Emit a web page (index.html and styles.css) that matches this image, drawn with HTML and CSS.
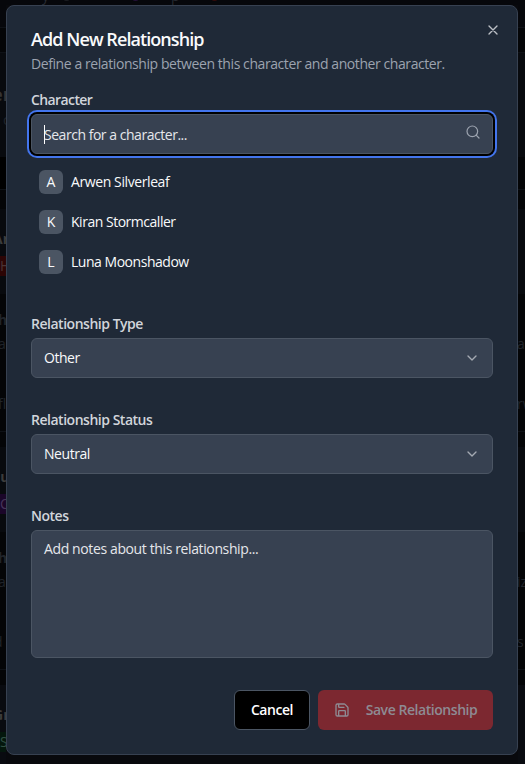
FILE: index.html
```html
<!DOCTYPE html>
<html lang="en">
<head>
<meta charset="utf-8">
<title>Add New Relationship</title>
<link rel="stylesheet" href="styles.css">
</head>
<body>
<div class="screen">
  <div class="strip" aria-hidden="true"><span class="frag-y">y</span><i class="dot gray"></i><i class="dot purple"></i><span class="frag-p">p</span><i class="dot red"></i></div>
  <div class="gutter left" aria-hidden="true">
    <div class="g h22"></div><div class="g line h25"></div>
    <div class="g panel line h105"><b class="er">er</b><span class="c">c</span></div>
    <div class="g black h32"></div>
    <div class="g line h20"></div>
    <div class="g panel h85"><b class="ar">Ar</b><span class="tag tag-red">H</span></div>
    <div class="g h137"><b class="th">h</b><span class="ta">a</span><span class="fl">fl</span></div>
    <div class="g line h16"></div>
    <div class="g panel h85"><b class="ar lu">lu</b><span class="tag tag-purple">C</span></div>
    <div class="g h137"><b class="th">h</b><span class="ta">a</span><span class="fl d">d</span></div>
    <div class="g line h16"></div>
    <div class="g panel rest"><b class="ar">Gr</b><span class="tag tag-green">S</span></div>
  </div>
  <main class="modal" role="dialog" aria-labelledby="title">
    <button class="close" aria-label="Close"><svg width="16" height="16" viewBox="0 0 24 24"><path d="M18 6 6 18M6 6l12 12"/></svg></button>
    <header>
      <h1 id="title"><span>Add New Relationship</span></h1>
      <p><span>Define a relationship between this character and another character.</span></p>
    </header>
    <section class="field character">
      <label class="short"><span>Character</span></label>
      <div class="control search"><i class="caret"></i><span class="placeholder">Search for a character...</span>
        <svg class="search-icon" width="16" height="16" viewBox="0 0 24 24"><circle cx="11" cy="11" r="8"/><path d="m21 21-4.3-4.3"/></svg>
      </div>
      <ul>
        <li><span class="avatar">A</span><span class="n1">Arwen Silverleaf</span></li>
        <li><span class="avatar">K</span><span class="n2">Kiran Stormcaller</span></li>
        <li><span class="avatar">L</span><span class="n3">Luna Moonshadow</span></li>
      </ul>
    </section>
    <section class="field">
      <label><span>Relationship Type</span></label>
      <div class="control"><span>Other</span><svg class="chevron" width="16" height="16" viewBox="0 0 24 24"><path d="m6 9 6 6 6-6"/></svg></div>
    </section>
    <section class="field">
      <label><span>Relationship Status</span></label>
      <div class="control"><span>Neutral</span><svg class="chevron" width="16" height="16" viewBox="0 0 24 24"><path d="m6 9 6 6 6-6"/></svg></div>
    </section>
    <section class="field notes">
      <label><span>Notes</span></label>
      <div class="control area"><span class="placeholder">Add notes about this relationship...</span></div>
    </section>
    <footer>
      <button class="btn cancel"><span>Cancel</span></button>
      <button class="btn save"><svg width="16" height="16" viewBox="0 0 24 24"><path d="M15.2 3a2 2 0 0 1 1.4.6l3.8 3.8a2 2 0 0 1 .6 1.4V19a2 2 0 0 1-2 2H5a2 2 0 0 1-2-2V5a2 2 0 0 1 2-2zM17 21v-7a1 1 0 0 0-1-1H8a1 1 0 0 0-1 1v7M7 3v4a1 1 0 0 0 1 1h7"/></svg><span>Save Relationship</span></button>
    </footer>
  </main>
  <div class="gutter right" aria-hidden="true">
    <div class="g h22"></div><div class="g line h25"></div>
    <div class="g panel line h105"></div>
    <div class="g h32"></div>
    <div class="g line h20"></div>
    <div class="g panel h85"></div>
    <div class="g h137"><span class="r1">an</span><span class="r2">rw</span></div>
    <div class="g line h16"></div>
    <div class="g panel h85"></div>
    <div class="g h137"><span class="r1">iz</span><span class="r2">s</span></div>
    <div class="g line h16"></div>
    <div class="g panel rest"></div>
  </div>
</div>
</body>
</html>
```
FILE: styles.css
```css
* { box-sizing: border-box; }
body { margin: 0; background: #040608; font: 14px/20px "Open Sans", "Noto Sans", sans-serif; color: #f9fafb; }
svg { fill: none; stroke: currentColor; stroke-width: 2; stroke-linecap: round; stroke-linejoin: round; flex: none; }
h1, p, ul { margin: 0; padding: 0; }
button { font: inherit; }
.screen { width: 525px; height: 764px; overflow: hidden; display: grid; grid-template-columns: 6px 512px 7px; grid-template-rows: 5px 750px 9px; background: #08090d; }
.strip { grid-column: 1 / 4; display: flex; overflow: hidden; background: #06070b; color: #262a31; line-height: 20px; padding-left: 42px; height: 5px; }
.strip span { margin-top: -14px; width: 8px; }
.dot { width: 9px; height: 9px; border-radius: 50%; margin-top: -8px; }
.gray { background: #1b1d22; margin-left: 12px; }
.purple { background: #241039; margin-left: 60px; }
.frag-p { margin-left: 31px; }
.red { background: #330b0b; margin-left: 31px; }
.gutter { grid-row: 2 / 4; overflow: hidden; color: #20242a; display: flex; flex-direction: column; }
.left { grid-column: 1; }
.right { grid-column: 3; }
.modal { grid-column: 2; grid-row: 2; }
.g { flex: none; background: #040507; overflow: hidden; display: flex; flex-direction: column; }
.g b, .g span { flex: none; display: block; height: 20px; white-space: nowrap; }
.panel { background: #080a0e; }
.line { border-top: 1px solid #0e1116; }
.black { background: #000; }
.h22 { height: 22px; background: #06070b; }
.h25 { height: 25px; }
.h105 { height: 105px; }
.h32 { height: 32px; }
.h20 { height: 20px; }
.h85 { height: 85px; }
.h137 { height: 137px; }
.h16 { height: 16px; }
.rest { height: 90px; background: #090b10; }
.g .er { font-size: 18px; margin: 31px 0 0 -8px; color: #343434; }
.g .c { margin: 6px 0 0 3px; }
.g .ar { margin: 20px 0 0 -7px; color: #3c3c3c; }
.g .lu { margin-left: -4px; }
.g .tag { height: 20px; margin-top: 7px; color: #4b3434; }
.g .tag-red { background: #2c0505; }
.g .tag-purple { background: #1b0629; color: #46345a; }
.g .tag-green { background: #04170d; color: #315044; }
.g .th { margin: 16px 0 0 -2px; }
.g .ta { margin: 4px 0 0 -2px; }
.g .fl { margin: 40px 0 0 -2px; }
.g .d { margin-left: -6px; }
.g .r1 { margin: 40px 0 0 -1px; }
.g .r2 { margin: 40px 0 0 -1px; }
.modal { position: relative; border: 1px solid #374151; border-radius: 8px; background: #1f2937; padding: 24px; display: flex; flex-direction: column; }
.close { position: absolute; top: 16px; right: 16px; width: 16px; height: 16px; padding: 0; border: 0; background: none; color: #bcc0c5; display: flex; }
header { height: 63px; white-space: nowrap; }
h1 { font-size: 18px; line-height: 18px; font-weight: 600; letter-spacing: -.93px; }
p { color: #9ca3af; margin-top: 6px; letter-spacing: -.42px; }
label { display: block; height: 14px; line-height: 14px; margin-bottom: 7px; font-weight: 600; color: #d1d5db; letter-spacing: -.48px; }
.short { letter-spacing: -.6px; }
.field { height: 96px; white-space: nowrap; }
.field.character { height: 224px; }
.notes { height: 181px; }
.control { height: 40px; border: 1px solid #4b5563; border-radius: 6px; background: #374151; display: flex; align-items: center; padding: 0 12px; font-weight: 500; letter-spacing: -.45px; }
.control > svg { margin-left: auto; }
.chevron { color: #a5aab2; }
.search-icon { color: #9ca3af; margin: -4px -1px 0 0; stroke-width: 1.8; }
.search { box-shadow: 0 0 0 2px #000, 0 0 0 4px #4375ed; letter-spacing: -.47px; }
.search .placeholder { padding-top: 2px; }
.caret { width: 1px; height: 19px; margin-right: -1px; background: #fff; }
.placeholder { color: #e5e7eb; }
.area { height: 128px; align-items: flex-start; padding-top: 8px; letter-spacing: -.38px; }
ul { list-style: none; padding-top: 8px; }
li { height: 40px; display: flex; align-items: center; gap: 8px; padding-left: 8px; font-weight: 500; letter-spacing: -.48px; }
.n1 { letter-spacing: -.4px; }
.n3 { letter-spacing: -.47px; }
.avatar { width: 24px; height: 24px; border-radius: 6px; background: #4b5563; text-align: center; line-height: 24px; letter-spacing: 0; }
footer { display: flex; justify-content: flex-end; gap: 8px; }
.btn { height: 40px; border-radius: 6px; display: flex; align-items: center; justify-content: center; font-weight: 600; padding: 0; letter-spacing: -.45px; white-space: nowrap; }
.cancel { width: 76px; border: 1px solid #4b5563; background: #000; color: #fff; }
.save { width: 175px; border: 0; background: #7c2830; color: #8e8b93; gap: 16px; }
```
